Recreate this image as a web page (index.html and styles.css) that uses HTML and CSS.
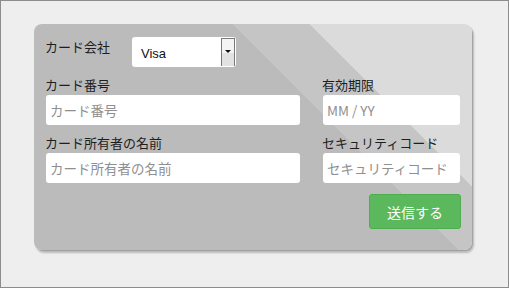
FILE: index.html
```html
<!DOCTYPE html>
<html lang="ja">
<head>
    <meta charset="UTF-8">
    <title>カード決済</title>
    <link rel="stylesheet" href="styles.css">
</head>
<body>
    <div class="page">
        <form class="card">
            <div class="brand-row">
                <label class="label">カード会社</label>
                <div class="select">
                    <span class="select-value">Visa</span>
                    <span class="select-btn"><span class="arrow"></span></span>
                </div>
            </div>
            <div class="row">
                <div class="field wide">
                    <label class="label">カード番号</label>
                    <input class="input" type="text" placeholder="カード番号">
                </div>
                <div class="field narrow">
                    <label class="label">有効期限</label>
                    <input class="input" type="text" placeholder="MM / YY">
                </div>
            </div>
            <div class="row">
                <div class="field wide">
                    <label class="label">カード所有者の名前</label>
                    <input class="input" type="text" placeholder="カード所有者の名前">
                </div>
                <div class="field narrow">
                    <label class="label">セキュリティコード</label>
                    <input class="input" type="text" placeholder="セキュリティコード">
                </div>
            </div>
            <div class="actions">
                <button class="submit" type="button">送信する</button>
            </div>
        </form>
    </div>
</body>
</html>
```

FILE: styles.css
```css
body {
    margin: 0;
    font-family: "Noto Sans CJK JP", "Liberation Sans", sans-serif;
    color: #222;
}

.page {
    width: 509px;
    height: 288px;
    box-sizing: border-box;
    border: 1px solid #8c8c8c;
    background: #eeeeee;
    padding: 23px 0 0 33px;
}

.card {
    width: 438px;
    height: 226px;
    box-sizing: border-box;
    padding: 13px 12px 0 12px;
    border-radius: 8px;
    background: linear-gradient(45deg, #bbbbbb 64%, #c5c5c5 64%, #c5c5c5 75.5%, #dbdbdb 75.5%);
    box-shadow: 2px 3px 2px rgba(0, 0, 0, 0.22), 1px 1px 0 #cfcfcf;
}

.label {
    display: block;
    font-size: 13px;
    line-height: 17px;
    color: #1e1e1e;
}

.brand-row {
    display: flex;
    align-items: flex-start;
}

.brand-row .label {
    width: 87px;
    padding-top: 1px;
    margin-left: -1px;
}

.select {
    width: 104px;
    height: 30px;
    box-sizing: border-box;
    background: #fff;
    border-radius: 3px;
    display: flex;
    align-items: center;
    justify-content: space-between;
    padding: 1px 1px 1px 9px;
}

.select-value {
    font-family: "Liberation Sans", Arial, sans-serif;
    font-size: 13px;
    padding-top: 3px;
    color: #111;
}

.select-btn {
    width: 14px;
    height: 28px;
    box-sizing: border-box;
    border-left: 1px solid #7a7a7a;
    border-right: 1px solid #7a7a7a;
    border-top: 1px solid #7a7a7a;
    background: linear-gradient(#f4f4f4 0%, #f4f4f4 52%, #e2e2e2 52%, #e2e2e2 100%);
    display: flex;
    justify-content: center;
    padding-top: 11px;
}

.arrow {
    width: 0;
    height: 0;
    border-left: 3px solid transparent;
    border-right: 3px solid transparent;
    border-top: 3px solid #111;
}

.row {
    display: flex;
    gap: 23px;
    margin-top: 9px;
}

.field {
    display: flex;
    flex-direction: column;
    gap: 2px;
}

.field .label {
    margin-left: -1px;
}

.wide {
    width: 254px;
}

.narrow {
    width: 137px;
}

.input {
    height: 30px;
    box-sizing: border-box;
    border: none;
    border-radius: 3px;
    background: #fff;
    padding: 0 4px;
    font-family: "Noto Sans CJK JP", sans-serif;
    font-size: 13.5px;
}

.input::placeholder {
    color: #8f8f8f;
}

.actions {
    display: flex;
    justify-content: flex-end;
    margin-top: 11px;
}

.submit {
    width: 92px;
    height: 35px;
    border: 1px solid #4cae4c;
    border-radius: 3px;
    background: #5cb85c;
    color: #fff;
    font-family: "Noto Sans CJK JP", sans-serif;
    font-size: 14px;
    margin-right: -1px;
}
```
